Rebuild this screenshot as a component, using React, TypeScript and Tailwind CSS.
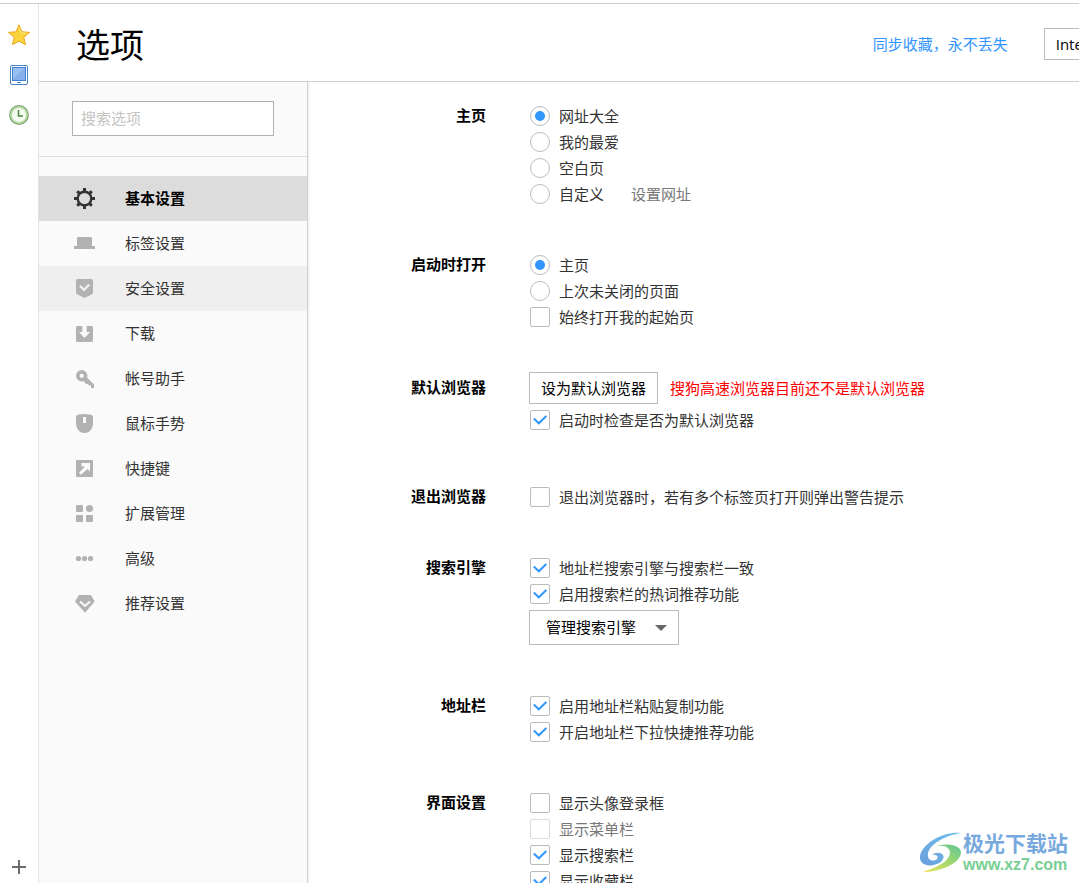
import type { ReactNode } from "react";
import clsx from "clsx";

const navItems = [
  {
    label: "基本设置",
    active: true,
    icon: (
      <>
        <circle cx="10.5" cy="10.5" r="6.8" fill="none" stroke="currentColor" strokeWidth="2.4" />
        <path
          d="M9 0h3v4H9zM9 17h3v4H9zM0 9h4v3H0zM17 9h4v3h-4zM2.2 4.2l2-2 2.4 2-2.4 2.4zM16.8 2.2l2 2-2 2.4-2.4-2.4zM18.8 16.8l-2 2-2.4-2 2.4-2.4zM4.2 18.8l-2-2 2-2.4 2.4 2.4z"
          fill="currentColor"
        />
      </>
    ),
  },
  {
    label: "标签设置",
    icon: <path d="M4 4h13l1 1v8h3v3H0v-3h3V5z" fill="currentColor" />,
  },
  {
    label: "安全设置",
    hovered: true,
    icon: (
      <>
        <path
          d="M3.5 1h14A1.5 1.5 0 0 1 19 2.5V15l-1.5 1.5-7 3.5-7-3.5L2 15V2.5A1.5 1.5 0 0 1 3.5 1z"
          fill="currentColor"
        />
        <path d="M6 7.8l4 4 5.3-5.3" fill="none" stroke="#efefef" strokeWidth="2.4" />
      </>
    ),
  },
  {
    label: "下载",
    icon: <path d="M3 3h5.3v6H5l5.5 6L16 9h-3.3V3H18l1 1v14l-1 1H3l-1-1V4z" fill="currentColor" />,
  },
  {
    label: "帐号助手",
    icon: (
      <>
        <circle cx="7.7" cy="7.8" r="3.9" fill="none" stroke="currentColor" strokeWidth="3.6" />
        <path d="M9 12.500l3.500-3.500 7.500 7.500v3.500h-3v-2.500h-2l-1-1.500h-2z" fill="currentColor" />
      </>
    ),
  },
  {
    label: "鼠标手势",
    icon: (
      <path
        fillRule="evenodd"
        d="M5 1.5q5.500-1 11 0 3 .5 3 2v6.500c0 5-3 10-8.500 10S2 15 2 10V3.500q0-1.500 3-2zM9 4v6h3V4z"
        fill="currentColor"
      />
    ),
  },
  {
    label: "快捷键",
    icon: (
      <>
        <rect x="2" y="2" width="17" height="17" rx="1" fill="currentColor" />
        <path d="M7.5 5H16v8.500l-2.500-2.500-6.500 5.800-2-2L11 8.500H7.500z" fill="#fafafa" />
      </>
    ),
  },
  {
    label: "扩展管理",
    icon: (
      <g fill="currentColor">
        <rect x="2" y="2" width="7" height="7" rx="1" />
        <circle cx="15.5" cy="5.5" r="3.6" />
        <rect x="2" y="12" width="7" height="7" rx="1" />
        <rect x="12" y="12" width="7" height="7" rx="1" />
      </g>
    ),
  },
  {
    label: "高级",
    icon: (
      <g fill="currentColor">
        <circle cx="4.5" cy="10.5" r="2.6" />
        <circle cx="10.5" cy="10.5" r="2.6" />
        <circle cx="16.5" cy="10.5" r="2.6" />
      </g>
    ),
  },
  {
    label: "推荐设置",
    icon: (
      <>
        <path d="M5 2h12l3.7 6.500L11 19.700 1 8.500z" fill="currentColor" />
        <path d="M6 8.500l5 4.500 5-4.500" fill="none" stroke="#fafafa" strokeWidth="2" />
      </>
    ),
  },
];

function Section({
  title,
  className,
  titleClassName = "leading-6",
  children,
}: {
  title: string;
  className?: string;
  titleClassName?: string;
  children: ReactNode;
}) {
  return (
    <section className={clsx("flex gap-[43px]", className)}>
      <h2 className={clsx("w-[178px] shrink-0 text-right font-bold text-black", titleClassName)}>{title}</h2>
      <div className="min-w-0 flex-1">{children}</div>
    </section>
  );
}

function Radio({ name, label, checked }: { name: string; label: string; checked?: boolean }) {
  return (
    <label className="flex h-[26px] items-center gap-[9px] pl-px">
      <span className="grid place-items-center">
        <input
          type="radio"
          name={name}
          defaultChecked={checked}
          className="peer col-start-1 row-start-1 size-5 appearance-none rounded-full border border-[#bbb] bg-white"
        />
        <span className="pointer-events-none col-start-1 row-start-1 hidden size-[10px] rounded-full bg-[#3296ff] peer-checked:block" />
      </span>
      {label}
    </label>
  );
}

function Checkbox({ label, checked, disabled }: { label: string; checked?: boolean; disabled?: boolean }) {
  return (
    <label className={clsx("flex h-[26px] items-center gap-[9px] pl-px", disabled && "text-[#777]")}>
      <span className="grid place-items-center">
        <input
          type="checkbox"
          defaultChecked={checked}
          disabled={disabled}
          className="peer col-start-1 row-start-1 size-5 appearance-none rounded-[2px] border border-[#bbb] bg-white disabled:border-[#ddd]"
        />
        <svg
          viewBox="0 0 20 20"
          className="pointer-events-none col-start-1 row-start-1 hidden size-5 peer-checked:block"
        >
          <path d="M3.8 8.600l5 4.700L16.300 6" fill="none" stroke="#3296ff" strokeWidth="2" />
        </svg>
      </span>
      {label}
    </label>
  );
}

function Rail() {
  return (
    <aside className="flex w-[39px] shrink-0 flex-col items-center gap-[18px] border-r border-[#e5e5e5] pt-5 pb-[9px]">
      <button type="button" aria-label="收藏">
        <svg viewBox="0 0 22 22" className="block size-[22px]">
          <path
            d="M11 .8l3 7 7.500.6-5.700 5 1.800 7.300L11 17.200l-6.600 3.500 1.800-7.300-5.700-5 7.500-.6z"
            fill="#fbd33c"
            stroke="#eaa61f"
            strokeLinejoin="round"
          />
          <path d="M11 3.500l2.200 5.300 5.300.5" fill="none" stroke="#fde98a" />
        </svg>
      </button>
      <button type="button" aria-label="设备">
        <svg viewBox="0 0 22 22" className="block size-[22px]">
          <rect x="2.500" y="1.500" width="17" height="19" rx="1.500" fill="#fff" stroke="#4583c9" />
          <rect x="4.500" y="3.500" width="13" height="13" fill="#84b1ec" stroke="#3f7fcb" />
          <path d="M5 4h12L5 15z" fill="#98c0f0" />
          <path d="M9 18.500h4" stroke="#4583c9" />
        </svg>
      </button>
      <button type="button" aria-label="历史">
        <svg viewBox="0 0 22 22" className="block size-[22px]">
          <circle cx="11" cy="11" r="9.200" fill="#f4faf0" stroke="#7fa873" strokeWidth="1.500" />
          <circle cx="11" cy="11" r="7.800" fill="none" stroke="#b5daa0" strokeWidth="1.500" />
          <path d="M10.500 6v6h4.500" fill="none" stroke="#4f8a3c" strokeWidth="1.500" />
        </svg>
      </button>
      <button type="button" aria-label="添加" className="mt-auto">
        <svg viewBox="0 0 14 14" className="block size-[14px]">
          <path d="M0 7h14M7 0v14" stroke="#6b6b6b" strokeWidth="2" />
        </svg>
      </button>
    </aside>
  );
}

function Sidebar() {
  return (
    <div className="w-[269px] shrink-0 border-r border-[#d0d0d0] bg-[#fafafa] shadow-[1px_0_2px_rgba(0,0,0,0.08)]">
      <div className="border-b border-[#ddd] px-[33px] pt-[19px] pb-5">
        <input
          type="text"
          aria-label="搜索选项"
          placeholder="搜索选项"
          className="block h-[35px] w-full border border-[#b0b0b0] bg-white px-2 pb-0.5 outline-none placeholder:text-[#c4c4c4]"
        />
      </div>
      <nav className="pt-[19px]">
        {navItems.map((item) => (
          <a
            key={item.label}
            href="#"
            className={clsx(
              "flex h-[45px] items-center gap-[30px] pl-[35px]",
              item.active && "bg-[#dcdcdc] font-bold text-black",
              item.hovered && "bg-[#efefef]"
            )}
          >
            <svg
              viewBox="0 0 21 21"
              className={clsx("size-[21px] shrink-0", item.active ? "text-[#333]" : "text-[#b2b2b2]")}
            >
              {item.icon}
            </svg>
            <span className="pb-0.5">{item.label}</span>
          </a>
        ))}
      </nav>
    </div>
  );
}

function Watermark() {
  return (
    <div className="absolute right-[11px] bottom-2 flex items-center">
      <svg viewBox="0 0 46 42" className="h-[42px] w-[46px]">
        <defs>
          <linearGradient id="swirl-blue" x1="0" y1="1" x2="1" y2="0">
            <stop offset="0" stopColor="#6a9edc" />
            <stop offset="1" stopColor="#6fc3ee" />
          </linearGradient>
          <linearGradient id="swirl-green" x1="0" y1="1" x2="1" y2="0">
            <stop offset="0" stopColor="#f0e45c" />
            <stop offset="0.5" stopColor="#a5d86c" />
            <stop offset="1" stopColor="#5cc596" />
          </linearGradient>
        </defs>
        <path
          d="M44 1C28-1 6 10 3 24c-1 7 6 11 13 9 8-1 12-6 10-10-2-3-8-3-11 0 4-1 7 1 5 4-3 3-10 2-9-5C12 13 26 4 44 1z"
          fill="url(#swirl-blue)"
        />
        <path
          d="M17 15c9-3 16 0 16 6-1 9-13 14-27 19 16 0 38-8 38-20-1-7-14-10-27-5z"
          fill="url(#swirl-green)"
        />
      </svg>
      <div className="whitespace-nowrap font-bold">
        <p className="text-[21px] leading-6 text-[#78a9dc]">极光下载站</p>
        <p className="font-['Liberation_Sans',sans-serif] text-base leading-5 text-[#78cf94]">www.xz7.com</p>
      </div>
    </div>
  );
}

export default function App() {
  return (
    <div className="relative h-screen overflow-hidden bg-white pt-[3px] font-['Open_Sans','Noto_Sans_CJK_SC',sans-serif] text-[15px] leading-5 text-[#333]">
      <div className="flex h-full border-t border-[#ccc]">
        <Rail />
        <div className="flex min-w-[1115px] flex-1 flex-col">
          <header className="flex h-[78px] shrink-0 items-center border-b border-[#d0d0d0] pt-0.5 pl-[37px]">
            <h1 className="pt-0.5 text-[34px] leading-10 text-black">选项</h1>
            <a href="#" className="ml-auto text-[#3296ff]">
              同步收藏，永不丢失
            </a>
            <button type="button" className="ml-9 h-8 border border-[#bbb] bg-white px-[11px] text-black">
              Internet选项
            </button>
          </header>

          <div className="flex min-h-0 flex-1">
            <Sidebar />
            <main className="min-w-0 flex-1 pt-[21px]">
              <Section title="主页" className="mb-[45px]">
                <Radio name="home" label="网址大全" checked />
                <Radio name="home" label="我的最爱" />
                <Radio name="home" label="空白页" />
                <div className="flex items-center gap-[27px]">
                  <Radio name="home" label="自定义" />
                  <button type="button" className="text-[#777]">
                    设置网址
                  </button>
                </div>
              </Section>

              <Section title="启动时打开" className="mb-[42px]">
                <Radio name="startup" label="主页" checked />
                <Radio name="startup" label="上次未关闭的页面" />
                <Checkbox label="始终打开我的起始页" />
              </Section>

              <Section title="默认浏览器" className="mb-[51px]" titleClassName="leading-[30px]">
                <div className="mb-[3px] flex items-center gap-3">
                  <button type="button" className="h-8 border border-[#bbb] bg-white px-[11px] text-black">
                    设为默认浏览器
                  </button>
                  <span className="text-[#f00]">搜狗高速浏览器目前还不是默认浏览器</span>
                </div>
                <Checkbox label="启动时检查是否为默认浏览器" checked />
              </Section>

              <Section title="退出浏览器" className="mb-[45px]">
                <Checkbox label="退出浏览器时，若有多个标签页打开则弹出警告提示" />
              </Section>

              <Section title="搜索引擎" className="mb-12">
                <Checkbox label="地址栏搜索引擎与搜索栏一致" checked />
                <Checkbox label="启用搜索栏的热词推荐功能" checked />
                <div className="mt-[3px] grid w-[150px] items-center">
                  <select
                    aria-label="管理搜索引擎"
                    className="col-start-1 row-start-1 h-[35px] w-full appearance-none border border-[#bbb] bg-white pb-0.5 pl-4 text-black"
                  >
                    <option>管理搜索引擎</option>
                  </select>
                  <svg
                    viewBox="0 0 12 6"
                    className="pointer-events-none col-start-1 row-start-1 mr-3 h-[6px] w-3 justify-self-end"
                  >
                    <path d="M0 0h12L6 6z" fill="#666" />
                  </svg>
                </div>
              </Section>

              <Section title="地址栏" className="mb-[45px]">
                <Checkbox label="启用地址栏粘贴复制功能" checked />
                <Checkbox label="开启地址栏下拉快捷推荐功能" checked />
              </Section>

              <Section title="界面设置">
                <Checkbox label="显示头像登录框" />
                <Checkbox label="显示菜单栏" disabled />
                <Checkbox label="显示搜索栏" checked />
                <Checkbox label="显示收藏栏" checked />
              </Section>
            </main>
          </div>
        </div>
      </div>
      <Watermark />
    </div>
  );
}
